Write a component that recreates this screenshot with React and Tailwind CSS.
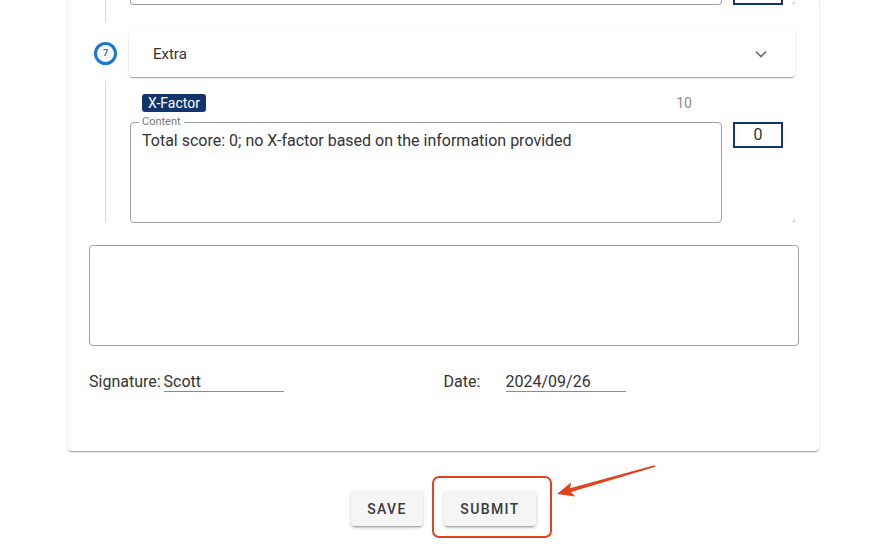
import React from 'react';

function ScoreBox({ value, className = '' }) {
  return (
    <div className={`w-[50px] h-[26px] border-2 border-[#12346b] flex items-center justify-center text-[16px] text-[#333] ${className}`}>
      {value}
    </div>
  );
}

function Corner() {
  // little resize grip in the corner of a step
  return <div className="w-[3px] h-[3px] border-r border-b border-[#d0d0d0]" />;
}

const raised = 'shadow-[0_2px_1px_-1px_rgba(0,0,0,0.2),0_1px_1px_0_rgba(0,0,0,0.14),0_1px_3px_0_rgba(0,0,0,0.12)]';
const btn = 'h-[35px] rounded-[4px] bg-[#f5f5f5] text-[14px] font-medium tracking-[0.1em] text-[#3a3a3a] pt-[2px] shadow-[0_3px_1px_-2px_rgba(0,0,0,0.2),0_2px_2px_0_rgba(0,0,0,0.14),0_1px_5px_0_rgba(0,0,0,0.12)]';

export default function App() {
  return (
    <div className="relative w-[891px] h-[546px] bg-white overflow-hidden text-[#333]" style={{ fontFamily: 'Roboto, "Liberation Sans", sans-serif' }}>
      {/* form card, top scrolled out of view */}
      <div className={`ml-[68px] w-[751px] bg-white rounded-b-[4px] pb-[59px] ${raised}`}>
        <div className="flex">
          {/* stepper rail */}
          <div className="w-[61px] shrink-0 pl-[26px]">
            <div className="w-[23px] flex flex-col items-center">
              <div className="w-px h-[22px] bg-[#dadada]" />
              <div className="mt-[20px] w-[23px] h-[23px] rounded-full border-[3px] border-[#1976d2] flex items-center justify-center text-[9px] font-bold text-[#1976d2] leading-none">
                7
              </div>
              <div className="w-px h-[141px] mt-[16px] bg-[#dadada]" />
            </div>
          </div>

          {/* step content */}
          <div className="w-[666px]">
            {/* remnant of previous step */}
            <div className="flex items-end h-[5px]">
              <div className="ml-px w-[595px] h-[5px] border-x border-b border-[#a0a0a0] rounded-b-[4px]" />
              <div className="ml-[11px] w-[50px] h-[5px] border-x-2 border-b-2 border-[#12346b]" />
              <div className="ml-[9px] mb-[1px]"><Corner /></div>
            </div>

            {/* accordion header */}
            <div className={`mt-[25px] h-[47px] bg-white rounded-[4px] flex items-center pl-[24px] pr-[28px] pt-[1px] ${raised}`}>
              <span className="text-[15px] text-[#333]">Extra</span>
              <svg className="ml-auto" width="12" height="8" viewBox="0 0 12 8" fill="none">
                <path d="M1 1.5 L6 6.5 L11 1.5" stroke="#6b6b6b" strokeWidth="1.6" />
              </svg>
            </div>

            {/* chip row */}
            <div className="mt-[17px] w-[563px] flex items-center h-[18px]">
              <span className="ml-[13px] h-[18px] px-[6px] rounded-[3px] bg-[#12346b] text-white text-[14px] leading-[18px]">X-Factor</span>
              <span className="ml-auto text-[14px] text-[#8a8a8a]">10</span>
            </div>

            {/* content field and score */}
            <div className="mt-[10px] flex items-start">
              <div className="relative ml-px w-[595px] h-[101px] border border-[#a0a0a0] rounded-[4px] pt-[8px] px-[11px]">
                <span className="absolute -top-[8px] left-[8px] px-[3px] bg-white text-[11px] leading-[14px] text-[#777]">Content</span>
                <p className="text-[16px] leading-[20px] text-[#333]">Total score: 0; no X-factor based on the information provided</p>
              </div>
              <ScoreBox value="0" className="ml-[11px]" />
              <div className="ml-[9px] self-end mb-[1px]"><Corner /></div>
            </div>
          </div>
        </div>

        {/* comment box */}
        <div className="ml-[21px] mt-[22px] mr-[20px] h-[101px] border border-[#a0a0a0] rounded-[4px]" />

        {/* signature / date */}
        <div className="mx-[21px] mt-[26px] grid grid-cols-2 text-[16px] leading-[20px]">
          <div className="flex items-start">
            <span>Signature:</span>
            <span className="ml-[3px] w-[120px] h-[20px] border-b border-[#8a8a8a]">Scott</span>
          </div>
          <div className="flex items-start">
            <span className="w-[62px]">Date:</span>
            <span className="w-[120px] h-[20px] border-b border-[#8a8a8a]">2024/09/26</span>
          </div>
        </div>
      </div>

      {/* actions */}
      <div className="ml-[68px] w-[751px] mt-[40px] flex justify-center gap-[21px]">
        <button className={`w-[72px] ${btn}`}>SAVE</button>
        <div className="relative">
          <button className={`w-[92px] ${btn}`}>SUBMIT</button>
          {/* annotation highlight */}
          <div className="absolute -left-[12px] -right-[16px] -top-[15px] -bottom-[12px] border-2 border-[#e2431c] rounded-[7px] pointer-events-none" />
        </div>
      </div>

      {/* annotation arrow */}
      <svg className="absolute left-0 top-0 pointer-events-none" width="891" height="546">
        <polygon
          points="557,494 575.3,496.6 570.9,492.1 655.5,466.8 654.5,465.2 569.9,488.3 571.3,482.2"
          fill="#e2431c"
        />
      </svg>
    </div>
  );
}
